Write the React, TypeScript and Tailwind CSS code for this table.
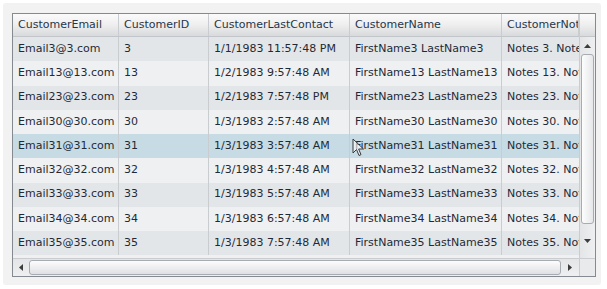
import React from 'react'

interface Row {
  email: string
  id: number
  contact: string
  name: string
  notes: string
}

const rows: Row[] = [
  { email: 'Email3@3.com', id: 3, contact: '1/1/1983 11:57:48 PM', name: 'FirstName3 LastName3', notes: 'Notes 3. Notes 3.' },
  { email: 'Email13@13.com', id: 13, contact: '1/2/1983 9:57:48 AM', name: 'FirstName13 LastName13', notes: 'Notes 13. Notes 13.' },
  { email: 'Email23@23.com', id: 23, contact: '1/2/1983 7:57:48 PM', name: 'FirstName23 LastName23', notes: 'Notes 23. Notes 23.' },
  { email: 'Email30@30.com', id: 30, contact: '1/3/1983 2:57:48 AM', name: 'FirstName30 LastName30', notes: 'Notes 30. Notes 30.' },
  { email: 'Email31@31.com', id: 31, contact: '1/3/1983 3:57:48 AM', name: 'FirstName31 LastName31', notes: 'Notes 31. Notes 31.' },
  { email: 'Email32@32.com', id: 32, contact: '1/3/1983 4:57:48 AM', name: 'FirstName32 LastName32', notes: 'Notes 32. Notes 32.' },
  { email: 'Email33@33.com', id: 33, contact: '1/3/1983 5:57:48 AM', name: 'FirstName33 LastName33', notes: 'Notes 33. Notes 33.' },
  { email: 'Email34@34.com', id: 34, contact: '1/3/1983 6:57:48 AM', name: 'FirstName34 LastName34', notes: 'Notes 34. Notes 34.' },
  { email: 'Email35@35.com', id: 35, contact: '1/3/1983 7:57:48 AM', name: 'FirstName35 LastName35', notes: 'Notes 35. Notes 35.' },
]

const SELECTED = 4

function HeaderCell({ label, className }: { label: string; className: string }) {
  return (
    <div className={`${className} h-full flex items-center pl-[5px] border-r border-[#c9ccd0] overflow-hidden whitespace-nowrap`}>
      {label}
    </div>
  )
}

function Arrow({ dir }: { dir: 'up' | 'down' | 'left' | 'right' }) {
  const points = {
    up: '0,4 3.5,0 7,4',
    down: '0,0 3.5,4 7,0',
    left: '4,0 0,3.5 4,7',
    right: '0,0 4,3.5 0,7',
  }[dir]
  const vertical = dir === 'up' || dir === 'down'
  return (
    <svg width={vertical ? 7 : 4} height={vertical ? 4 : 7} viewBox={vertical ? '0 0 7 4' : '0 0 4 7'}>
      <polygon points={points} fill="#3c3c3c" />
    </svg>
  )
}

export default function App() {
  return (
    <div className="w-[607px] h-[289px] bg-white p-[3px]" style={{ fontFamily: '"DejaVu Sans", Verdana, sans-serif' }}>
      <div className="w-[598px] h-[282px] bg-[#f2f2f2] rounded-[3px] pt-[10px] pl-[9px] relative">
        {/* Grid */}
        <div className="w-[584px] h-[264px] border border-[#858a91] bg-[#f0f0f0] flex flex-col text-[11px] text-[#1f2a36]">
          <div className="flex flex-1 min-h-0">
            {/* Table */}
            <div className="w-[566px] flex flex-col overflow-hidden">
              {/* Header */}
              <div className="h-[23px] flex border-b border-[#c2c5c9] bg-gradient-to-b from-[#fbfbfb] via-[#eeeeee] to-[#d9dadc] text-[#26364a]">
                <HeaderCell label="CustomerEmail" className="w-[106px]" />
                <HeaderCell label="CustomerID" className="w-[90px]" />
                <HeaderCell label="CustomerLastContact" className="w-[141px]" />
                <HeaderCell label="CustomerName" className="w-[152px]" />
                <HeaderCell label="CustomerNotes" className="flex-1" />
              </div>
              {/* Rows */}
              {rows.map((r, i) => {
                const bg = i === SELECTED ? 'bg-[#c6dbe4]' : i % 2 === 0 ? 'bg-[#e3e6e9]' : 'bg-[#eff0f1]'
                return (
                  <div key={r.id} className={`h-[24.25px] flex items-center ${bg} whitespace-nowrap`}>
                    <div className="w-[106px] h-full flex items-center pl-[5px] border-r border-[#cacdd0] overflow-hidden">{r.email}</div>
                    <div className="w-[90px] h-full flex items-center pl-[5px] border-r border-[#cacdd0] overflow-hidden">{r.id}</div>
                    <div className="w-[141px] h-full flex items-center pl-[5px] border-r border-[#cacdd0] overflow-hidden">{r.contact}</div>
                    <div className="w-[152px] h-full flex items-center pl-[5px] border-r border-[#cacdd0] overflow-hidden">{r.name}</div>
                    <div className="flex-1 h-full flex items-center pl-[5px] overflow-hidden">{r.notes}</div>
                  </div>
                )
              })}
            </div>
            {/* Vertical scrollbar */}
            <div className="w-[16px] flex flex-col border-l border-[#c9ccd0] bg-gradient-to-r from-[#e4e5e7] to-[#eeeff0]">
              <div className="h-[23px] border-b border-[#c2c5c9] bg-gradient-to-b from-[#fbfbfb] via-[#eeeeee] to-[#d9dadc]" />
              <div className="h-[17px] flex items-center justify-center">
                <Arrow dir="up" />
              </div>
              <div className="h-[170px] mx-[1px] rounded-[3px] border border-[#a8abb0] bg-gradient-to-r from-[#fdfdfd] to-[#e6e7e9]" />
              <div className="flex-1 flex items-center justify-center">
                <Arrow dir="down" />
              </div>
            </div>
          </div>
          {/* Horizontal scrollbar */}
          <div className="h-[18px] flex border-t border-[#c9ccd0] bg-gradient-to-b from-[#e4e5e7] to-[#eeeff0]">
            <div className="w-[16px] flex items-center justify-center">
              <Arrow dir="left" />
            </div>
            <div className="w-[532px] my-[1px] rounded-[3px] border border-[#a8abb0] bg-gradient-to-b from-[#fdfdfd] to-[#dfe0e3]" />
            <div className="w-[18px] flex items-center justify-center">
              <Arrow dir="right" />
            </div>
            <div className="flex-1 border-l border-[#c9ccd0] bg-[#e9eaec]" />
          </div>
        </div>
        {/* Mouse cursor */}
        <svg className="absolute left-[349px] top-[135px]" width="13" height="20" viewBox="0 0 13 20">
          <path d="M1 1 L1 15 L4.5 11.5 L7 17.5 L9 16.6 L6.6 11 L11.5 11 Z" fill="#ffffff" fillOpacity="0.6" stroke="#3a3a3a" strokeWidth="1" />
        </svg>
      </div>
    </div>
  )
}
